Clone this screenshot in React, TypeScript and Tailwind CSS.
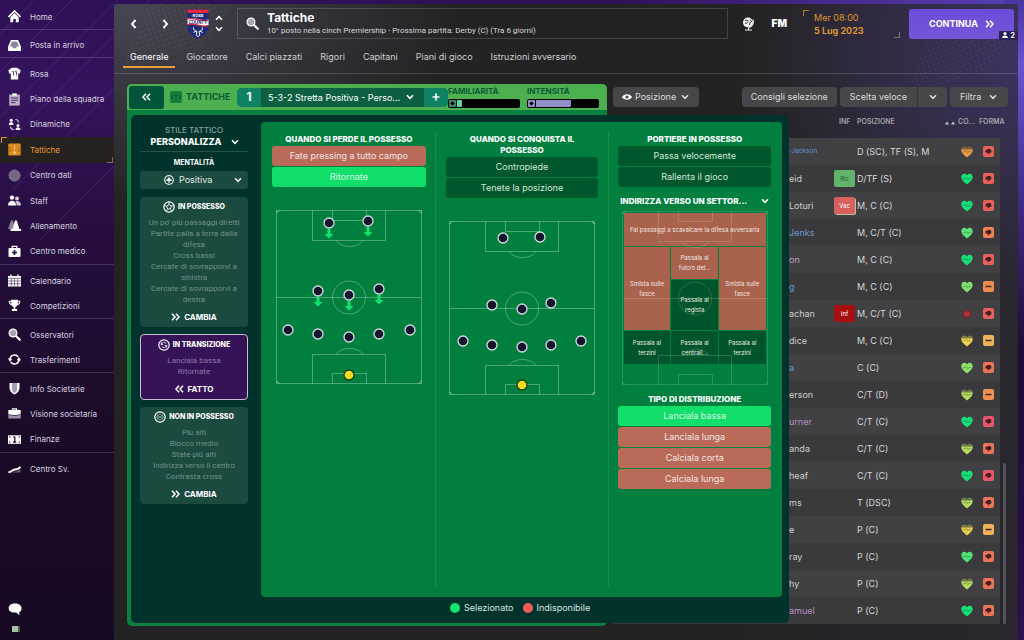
import type { ReactNode } from 'react';

const CHEVRON = 'pointer-events-none absolute top-1/2 -translate-y-1/2';

function Chevron({ className = '' }: { className?: string }) {
  return (
    <svg viewBox="0 0 8 6" aria-hidden="true" className={`h-[6px] w-2 shrink-0 ${className}`}>
      <path d="M1 1.3 4 4.3 7 1.3" fill="none" stroke="currentColor" strokeWidth="1.6" />
    </svg>
  );
}

function Double({ left = false, className = '' }: { left?: boolean; className?: string }) {
  return (
    <svg viewBox="0 0 9 8" aria-hidden="true" className={`h-2 w-[9px] shrink-0 ${left ? 'rotate-180' : ''} ${className}`}>
      <path d="M1 .8 4 4 1 7.2M5 .8 8 4 5 7.2" fill="none" stroke="currentColor" strokeWidth="1.5" />
    </svg>
  );
}

function Magnifier() {
  return (
    <svg viewBox="0 0 13 13" className="size-[13px] shrink-0" aria-hidden="true">
      <circle cx="5" cy="5" r="3.9" fill="#a9a6ae" stroke="#fff" strokeWidth="1.2" />
      <path d="m8.2 8.2 3.6 3.6" stroke="#fff" strokeWidth="2.2" strokeLinecap="round" />
    </svg>
  );
}

const icons: Record<string, ReactNode> = {
  home: (
    <>
      <path d="M.5 7 6.5 1l6 6" fill="none" stroke="#fff" strokeWidth="1.6" />
      <path d="M2.3 7.2 6.5 3l4.2 4.2v5H7.8V9H5.2v3.200H2.300Z" fill="#fff" />
    </>
  ),
  inbox: (
    <>
      <path d="M3 1h7l3 6.500V12H0V7.500Z" fill="#8f849f" />
      <path d="M3 1h7l2.800 6.500V12H.2V7.500ZM4 2.400 2 7.600h2.200L5 9.200h3l.8-1.600H11L9 2.400Z" fill="#fff" fillRule="evenodd" />
    </>
  ),
  shirt: (
    <>
      <path d="M4 .8h5l3.700 2.400-1 3.500-1.500-.4v6.200H2.800V6.300l-1.500.4-1-3.500Z" fill="#fff" />
      <path d="M4.300 4.500h1.200V8.500M7.200 4.500h1.200V8.500" fill="none" stroke="#4a2a6e" strokeWidth=".9" />
    </>
  ),
  clipboard: (
    <>
      <path d="M1.200 1.600h10.600v11H1.200Z" fill="#b9b1c4" />
      <path d="M4.300.3h4.400v2.400H4.300Z" fill="#fff" />
      <path d="M3 5h7M3 7.300h7M3 9.600h4.500" stroke="#3d2059" strokeWidth=".9" />
    </>
  ),
  dynamics: (
    <>
      <circle cx="3.200" cy="2.200" r="1.500" fill="#fff" />
      <path d="M.8 7c0-4 4.800-4 4.800 0ZM7.500 12c0-3.600 5-3.600 5 0Z" fill="#fff" />
      <circle cx="10" cy="7.500" r="1.500" fill="#fff" />
      <path d="M7.300 1.500c2 0 3.200 1 3.200 3M2.600 8.600c0 2 1.200 3 3.200 3" fill="none" stroke="#cfc8d8" strokeWidth="1.200" />
    </>
  ),
  tactics: (
    <>
      <rect x=".3" y=".5" width="12.400" height="12" rx="1" fill="#d98a22" />
      <path d="M6.500 2.600v4M6.500 8v2.600M4.900 8.800l1.600 1.800 1.600-1.800" stroke="#fbc368" strokeWidth="1.200" fill="none" />
      <path d="M2 4v5M11 4v5" stroke="#a8650f" strokeWidth=".8" />
    </>
  ),
  data: (
    <>
      <circle cx="6.500" cy="6.500" r="5.500" fill="#6d6279" stroke="#9a90a6" strokeDasharray="1.500 .8" />
      <path d="M3 4.500 6.500 3 10 4.500v4L6.500 10 3 8.500Z" fill="none" stroke="#897e95" strokeWidth=".7" />
    </>
  ),
  staff: (
    <>
      <circle cx="4" cy="3.600" r="2.200" fill="#fff" />
      <path d="M0 11.500C0 5.300 8 5.300 8 11.500Z" fill="#fff" />
      <circle cx="9" cy="4.400" r="2" fill="#cfc9d8" />
      <path d="M8.600 11.500c0-2-.6-3.400-1.400-4.200C10.200 6.500 13 8 13 11.500Z" fill="#cfc9d8" />
    </>
  ),
  cones: (
    <>
      <path d="M3 1.500h1.800L7.500 10H0Z" fill="#8c8299" />
      <path d="M7 1.500h1.800l2.600 8.500H13v2H2.500v-2h1.900Z" fill="#fff" />
    </>
  ),
  medical: (
    <>
      <path d="M4.200 3.200V1.400h4.600v1.800" fill="none" stroke="#fff" strokeWidth="1.300" />
      <rect x=".5" y="3" width="12" height="9" rx="1" fill="#fff" />
      <path d="M6.500 5v5M4 7.500h5" stroke="#2a1240" strokeWidth="1.700" />
    </>
  ),
  calendar: (
    <>
      <path d="M0 2h13v10.500H0Z" fill="#fff" />
      <path d="M3 .5v2M10 .5v2" stroke="#fff" strokeWidth="1.400" />
      <path d="M0 4.300h13M3.300 4.300v8M6.500 4.300v8M9.700 4.300v8M0 7h13M0 9.700h13" stroke="#56436b" strokeWidth=".7" />
    </>
  ),
  trophy: (
    <path d="M3.200.8h6.600v.9h2.500c0 2.800-1 4.200-3 4.500-.5 1-1.200 1.600-2 1.900v2h1.800v2H3.900v-2h1.800v-2c-.8-.3-1.500-.9-2-1.900-2-.3-3-1.700-3-4.500h2.500Zm0 1.900H1.800c.1 1 .6 1.700 1.500 2.100Zm6.600 0-.1 2.100c.9-.4 1.400-1.100 1.500-2.100Z" fill="#fff" fillRule="evenodd" />
  ),
  transfers: (
    <>
      <path d="M2 6a4.500 4.500 0 0 1 8.200-2M11 7a4.500 4.500 0 0 1-8.200 2" fill="none" stroke="#fff" strokeWidth="1.500" />
      <path d="m0 5.600 4.200.2L2 9ZM13 7.400l-4.200-.2L11 4Z" fill="#fff" />
    </>
  ),
  shield: (
    <>
      <path d="M1.500 1h10v5c0 3-2 5-5 6.500-3-1.500-5-3.500-5-6.500Z" fill="#fff" />
      <path d="M4 1h5v6.500c0 1.500-1 2.800-2.500 3.800C5 10.300 4 9 4 7.500Z" fill="#a89eb4" />
    </>
  ),
  briefcase: (
    <>
      <path d="M4.500 3.200V1.800h4v1.400" fill="none" stroke="#fff" strokeWidth="1.200" />
      <path d="M.3 3h12.400v4.200l-6.200 1-6.200-1Z" fill="#fff" />
      <path d="M.3 7.800 6.500 9l6.200-1.200v3.700H.3Z" fill="#9c93a8" />
    </>
  ),
  money: (
    <>
      <rect y="2.300" width="13" height="8.500" fill="#fff" />
      <path d="M5.200 4.200h1.600v4.800M5 9h3.200" fill="none" stroke="#2a1240" strokeWidth="1.300" />
      <path d="M1 4h1.500M1 9h1.500M10.500 4H12M10.500 9H12" stroke="#2a1240" strokeWidth="1" />
    </>
  ),
  growth: (
    <>
      <path d="M.5 10.200C4 11 5 8.500 7.500 8.500c2 0 3.500-1 5-2.500v3.500H.5Z" fill="#6d6279" />
      <path d="M.5 9C3.500 9.500 4.500 6.500 7 6.500c2.300 0 4-1 5.500-2.700" fill="none" stroke="#fff" strokeWidth="1.900" />
    </>
  ),
};

type NavItem = { label: string; icon: string; active?: boolean };

const navGroups: { size: string; items: NavItem[] }[] = [
  { size: 'h-[29px] border-transparent', items: [{ label: 'Home', icon: 'home' }] },
  { size: 'h-7 border-white/15', items: [{ label: 'Posta in arrivo', icon: 'inbox' }] },
  {
    size: 'h-[207px] border-white/15',
    items: [
      { label: 'Rosa', icon: 'shirt' },
      { label: 'Piano della squadra', icon: 'clipboard' },
      { label: 'Dinamiche', icon: 'dynamics' },
      { label: 'Tattiche', icon: 'tactics', active: true },
      { label: 'Centro dati', icon: 'data' },
      { label: 'Staff', icon: 'staff' },
      { label: 'Allenamento', icon: 'cones' },
      { label: 'Centro medico', icon: 'medical' },
    ],
  },
  {
    size: 'h-[54px] border-white/15',
    items: [
      { label: 'Calendario', icon: 'calendar' },
      { label: 'Competizioni', icon: 'trophy' },
    ],
  },
  {
    size: 'h-[54px] border-white/15',
    items: [
      { label: 'Osservatori', icon: 'search' },
      { label: 'Trasferimenti', icon: 'transfers' },
    ],
  },
  {
    size: 'h-20 border-white/15',
    items: [
      { label: 'Info Societarie', icon: 'shield' },
      { label: 'Visione societaria', icon: 'briefcase' },
      { label: 'Finanze', icon: 'money' },
    ],
  },
  { size: 'h-[30px] border-white/15', items: [{ label: 'Centro Sv.', icon: 'growth' }] },
];

function Sidebar() {
  return (
    <aside className="flex w-[114px] shrink-0 flex-col">
      <nav className="flex flex-col">
        {navGroups.map((group) => (
          <ul key={group.items[0].label} className={`flex flex-col border-t pt-[3px] ${group.size}`}>
            {group.items.map((item) => (
              <li key={item.label} className="flex min-h-0 flex-1">
                <a
                  href="#"
                  className={`relative flex flex-1 items-center gap-[9px] pl-2 text-[8px] ${
                    item.active ? 'bg-[#26221f] text-[#e89a2e]' : 'text-[#d9d3e0]'
                  }`}
                >
                  {item.icon === 'search' ? (
                    <Magnifier />
                  ) : (
                    <svg viewBox="0 0 13 13" className="size-[13px] shrink-0" aria-hidden="true">
                      {icons[item.icon]}
                    </svg>
                  )}
                  <span className="whitespace-nowrap">{item.label}</span>
                  {item.active && (
                    <>
                      <span className="absolute top-0 left-px size-[6px] border-t border-l border-[#e0932b]" />
                      <span className="absolute right-px bottom-0 size-[6px] border-r border-b border-[#6f6b75]" />
                    </>
                  )}
                </a>
              </li>
            ))}
          </ul>
        ))}
      </nav>
      <div className="mt-auto flex flex-col gap-[9px] pb-2 pl-2">
        <button type="button" aria-label="Chat" className="mb-px">
          <svg viewBox="0 0 14 13" className="h-[13px] w-[14px]">
            <path d="M7 .5c4 0 6.500 2 6.500 4.700 0 2.300-.9 3.400-2.300 4l.3 3-3.400-2.600C3.500 9.800.7 8.300.7 5.200.7 2.500 3 .5 7 .5Z" fill="#fff" />
          </svg>
        </button>
        <span className="ml-1 h-[6px] w-2 border-r-2 border-[#4e5a50] bg-[#a5c3a0]" />
      </div>
    </aside>
  );
}

function Crest() {
  return (
    <svg viewBox="0 0 22 30" className="h-[30px] w-[22px] shrink-0" role="img" aria-label="Ross County">
      <path d="M.5.500h21V18c0 5-5 9-10.500 11.500C5.500 27 .5 23 .5 18Z" fill="#1c2a78" />
      <path d="M.5.500h21v3.500H.5Z" fill="#e2263b" />
      <path d="M.5 9.500c7-2 14 3 21 1v6c-7 2-14-3-21-1Z" fill="#fff" />
      <path d="M.5 9.500c7-2 14 3 21 1v1.300c-7 2-14-3-21-1Z" fill="#e2263b" />
      <path d="M.5 15c7-2 14 3 21 1v1.300c-7 2-14-3-21-1Z" fill="#e2263b" />
      <text x="11" y="8" fontSize="4" fontWeight="700" fill="#fff" textAnchor="middle">ROSS</text>
      <text x="11" y="14.800" fontSize="4.200" fontWeight="700" fill="#1c2a78" textAnchor="middle">COUNTY</text>
      <path d="M6.500 18.500c-.5 2.500 1.500 3.500 3.500 4l-.8 3.500 1.800 1.800 1.800-1.800-.8-3.500c2-.5 4-1.500 3.500-4M9 22l-2.500 1.500M13 22l2.500 1.500" fill="none" stroke="#fff" strokeWidth="1" />
    </svg>
  );
}

function Header() {
  return (
    <header className="flex h-[31px] items-center pr-1 pl-[15px] text-white">
      <button type="button" aria-label="Indietro" className="flex w-2 justify-center">
        <svg viewBox="0 0 7 10" className="h-[10px] w-[7px]"><path d="M5.500 1 2 5l3.500 4" fill="none" stroke="#fff" strokeWidth="1.900" /></svg>
      </button>
      <button type="button" aria-label="Avanti" className="ml-6 flex w-2 justify-center">
        <svg viewBox="0 0 7 10" className="h-[10px] w-[7px]"><path d="M1.500 1 5 5 1.500 9" fill="none" stroke="#fff" strokeWidth="1.900" /></svg>
      </button>
      <span className="ml-[18px] flex"><Crest /></span>
      <button type="button" aria-label="Cambia squadra" className="mr-[14px] ml-[6px] flex flex-col gap-[5px]">
        <Chevron className="rotate-180" />
        <Chevron />
      </button>
      <div className="flex h-full min-w-0 flex-1 items-center gap-2 border border-white/15 pl-2">
        <Magnifier />
        <div className="min-w-0">
          <h1 className="text-[12px] leading-[14px] font-bold">Tattiche</h1>
          <p className="truncate font-['Roboto',sans-serif] text-[8px] leading-[11px] text-[#d6d6d8]">
            10° posto nella cinch Premiership - Prossima partita: Derby (C) (Tra 6 giorni)
          </p>
        </div>
      </div>
      <button type="button" aria-label="Social" className="ml-[14px]">
        <svg viewBox="0 0 13 14" className="h-[14px] w-[13px]">
          <circle cx="6" cy="5.500" r="5" fill="#f3f3f3" />
          <path d="M3 3.500 5 3l1 1.500-1.500 2L3 6M8 2.500l1.500 2-1.500 1-.5 2.500" fill="none" stroke="#333" />
          <path d="M11 2.500c1.600 3.500-1 8-4.500 8.300M3 13h7M6.500 11v2" fill="none" stroke="#f3f3f3" />
        </svg>
      </button>
      <a href="#" className="ml-[17px] text-[10px] font-black">FM</a>
      <div className="relative ml-4 flex h-[29px] w-[97px] flex-col justify-center pl-[11px] text-[9px] leading-[13px] text-[#dc9630]">
        <span className="absolute top-px left-0 size-[6px] border-t border-l border-[#b07a2c]" />
        <span>Mer 08:00</span>
        <span className="font-bold">5 Lug 2023</span>
        <span className="absolute right-0 bottom-0 size-[6px] border-r border-b border-[#77757c]" />
      </div>
      <button
        type="button"
        className="relative ml-[9px] flex h-[30px] w-[105px] items-center justify-center gap-[7px] rounded-[3px] bg-linear-to-b from-[#6d4cdb] to-[#7455d6] text-[9px] font-bold"
      >
        CONTINUA
        <Double />
        <span className="absolute -right-1 -bottom-px flex h-[9px] items-center gap-[3px] rounded-[1px] bg-[#2d1f58] px-[3px] text-[7px] leading-none">
          <svg viewBox="0 0 6 6" className="size-[6px]" aria-hidden="true">
            <circle cx="3" cy="1.600" r="1.500" fill="#fff" />
            <path d="M0 6c0-3.500 6-3.500 6 0Z" fill="#fff" />
          </svg>
          2
        </span>
      </button>
    </header>
  );
}

const tabs = ['Generale', 'Giocatore', 'Calci piazzati', 'Rigori', 'Capitani', 'Piani di gioco', 'Istruzioni avversario'];

function Tabs() {
  return (
    <nav className="flex h-[35px] items-end gap-1 border-b border-white/15 pb-[5px] pl-[9px]">
      {tabs.map((tab, i) => (
        <a
          key={tab}
          href="#"
          className={`flex h-[23px] items-center border-b-2 px-[7px] pt-[2px] text-[9px] whitespace-nowrap ${
            i === 0 ? 'border-[#e8a03c] text-white' : 'border-transparent text-[#cfcfd1]'
          }`}
        >
          {tab}
        </a>
      ))}
    </nav>
  );
}

function Meter({ label, fill, mark, width }: { label: string; fill: string; mark: string; width: string }) {
  return (
    <div className="flex w-[72px] flex-col">
      <span className="text-[8px] leading-[9px] font-bold text-[#0b5a32]">{label}</span>
      <div className="mt-[3px] flex h-[9px] rounded-[2px] bg-black p-px">
        <span className={`flex w-[7px] items-center justify-center rounded-[1px] ${mark}`}>
          <svg viewBox="0 0 5 5" className="size-[5px]" aria-hidden="true"><path d="M2.500.300 4.700 2.500 2.500 4.700.300 2.500Z" /></svg>
        </span>
        <span className={`ml-px rounded-r-[1px] ${fill}`} style={{ width }} />
      </div>
    </div>
  );
}

function TacticPanel() {
  return (
    <section className="flex flex-col overflow-hidden rounded-[5px] bg-[#0a8040]">
      <div className="flex h-[26px] items-center bg-[#4caf50] px-[2px]">
        <button type="button" aria-label="Chiudi" className="flex h-[23px] w-[35px] items-center justify-center rounded-[3px] bg-[#00543a] text-white">
          <Double left />
        </button>
        <svg viewBox="0 0 12 12" className="ml-[6px] size-3" aria-hidden="true">
          <rect width="12" height="12" rx="1.500" fill="#17803f" />
          <path d="M6 2.500v3.500M6 7.500v2M2 4v4M10 4v4" stroke="#0b5a32" strokeWidth="1.100" />
        </svg>
        <h2 className="ml-1 text-[9px] font-bold text-[#0b5a32]">TATTICHE</h2>
        <div className="ml-auto flex h-[19px] w-[211px] shrink-0 overflow-hidden rounded-[5px] bg-[#0c5f41] text-white">
          <span className="flex w-6 shrink-0 items-center justify-center bg-[#0f8264] text-[12px] font-bold">1</span>
          <div className="relative flex min-w-0 flex-1">
            <select aria-label="Tattica" className="h-full w-full appearance-none pr-[14px] pl-[7px] text-[9px] leading-[19px]">
              <option>5-3-2 Stretta Positiva - Perso...</option>
            </select>
            <Chevron className={`${CHEVRON} right-[10px]`} />
          </div>
          <button type="button" aria-label="Aggiungi tattica" className="flex w-6 shrink-0 items-center justify-center bg-[#0f8264]">
            <svg viewBox="0 0 8 8" className="size-2"><path d="M4 .5v7M.5 4h7" stroke="#fff" strokeWidth="1.700" /></svg>
          </button>
        </div>
        <div className="mr-[6px] flex gap-[7px]">
          <Meter label="FAMILIARITÀ" mark="bg-[#3a8a70]" fill="bg-[#5fd3a4]" width="5px" />
          <Meter label="INTENSITÀ" mark="bg-[#8f90c8]" fill="bg-[#8f90c8]" width="35px" />
        </div>
      </div>
    </section>
  );
}

type Player = { name: string; tone: string; pos: string; inf?: string; heart: string; drained?: boolean; form: string; flat?: boolean };

const players: Player[] = [
  { name: '-Jackson', tone: "text-[#5b8fc4] text-[7px] font-['Roboto',sans-serif]", pos: 'D (SC), TF (S), M', heart: '#e99b45', drained: true, form: '#e8605c' },
  { name: 'eid', tone: 'text-[#cfcfcf]', pos: 'D/TF (S)', inf: 'Ric', heart: '#15e077', form: '#e8605c' },
  { name: 'Loturi', tone: 'text-[#cfcfcf]', pos: 'M, C (C)', inf: 'Vac', heart: '#15e077', form: '#e8605c' },
  { name: 'Jenks', tone: 'text-[#6b9bd0]', pos: 'M, C/T (C)', heart: '#5fe276', form: '#ee8156' },
  { name: 'on', tone: 'text-[#b9a8c0]', pos: 'M, C (C)', heart: '#15e077', form: '#e8605c' },
  { name: 'g', tone: 'text-[#6b9bd0]', pos: 'M, C (C)', heart: '#7be06c', form: '#ee8b50', flat: true },
  { name: 'achan', tone: 'text-[#cfcfcf]', pos: 'M, C/T (C)', inf: 'Inf', heart: '', form: '#e8605c' },
  { name: 'dice', tone: 'text-[#cfcfcf]', pos: 'M, C (C)', heart: '#eed64f', drained: true, form: '#f0b259', flat: true },
  { name: 'a', tone: 'text-[#6b9bd0]', pos: 'C (C)', heart: '#8be068', form: '#ea7458' },
  { name: 'erson', tone: 'text-[#cfcfcf]', pos: 'C/T (D)', heart: '#b5dc5e', drained: true, form: '#ee9152', flat: true },
  { name: 'urner', tone: 'text-[#b892c2]', pos: 'C/T (C)', heart: '#15e077', form: '#e8566c' },
  { name: 'anda', tone: 'text-[#cfcfcf]', pos: 'C/T (C)', heart: '#b5dc5e', drained: true, form: '#ea7458' },
  { name: 'heaf', tone: 'text-[#cfcfcf]', pos: 'C/T (C)', heart: '#15e077', form: '#e8566c' },
  { name: 'ms', tone: 'text-[#cfcfcf]', pos: 'T (DSC)', heart: '#b5dc5e', drained: true, form: '#ea7458' },
  { name: 'e', tone: 'text-[#cfcfcf]', pos: 'P (C)', heart: '#e8cf50', drained: true, form: '#f0b259', flat: true },
  { name: 'ray', tone: 'text-[#cfcfcf]', pos: 'P (C)', heart: '#4fe277', form: '#ea7458' },
  { name: 'hy', tone: 'text-[#cfcfcf]', pos: 'P (C)', heart: '#b5dc5e', drained: true, form: '#ea7458' },
  { name: 'amuel', tone: 'text-[#b892c2]', pos: 'P (C)', heart: '#15e077', form: '#ea7458' },
];

const infTone: Record<string, string> = {
  Ric: 'bg-[#62b36c] text-[#205c2b]',
  Vac: 'bg-[#d8605f] text-white shadow-[1px_1px_0_#b9c49a]',
  Inf: 'bg-[#a80d10] text-white',
};

const HEART = 'M6 11.500C2.500 8.700.3 6.800.3 4.100.3 2.200 1.700.8 3.300.8 4.400.8 5.400 1.400 6 2.300 6.600 1.400 7.600.8 8.700.8c1.600 0 3 1.400 3 3.300 0 2.700-2.200 4.600-5.700 7.400Z';

function Heart({ color, drained }: { color: string; drained?: boolean }) {
  if (!color) {
    return (
      <svg viewBox="0 0 12 12" className="inline-block size-3" aria-hidden="true">
        <circle cx="6" cy="6" r="4.500" fill="#6e2c30" />
        <circle cx="6" cy="6" r="2.800" fill="#b23238" />
      </svg>
    );
  }
  return (
    <svg viewBox="0 0 12 12" className="inline-block size-3" aria-hidden="true">
      <path d={HEART} fill={color} />
      {drained && <path d="M.6 3.600C.8 1.900 2 .8 3.300.8 4.400.8 5.400 1.400 6 2.300 6.600 1.400 7.600.8 8.700.8c1.300 0 2.500 1.100 2.700 2.800Z" fill="#3a3a3c" opacity=".6" />}
      <path d="M2.500 5.600h1.600L5.200 4.500l1.600 2.200 1-1.100h1.700" fill="none" stroke="#2b3a30" strokeOpacity=".6" strokeWidth=".7" />
    </svg>
  );
}

function Form({ color, flat }: { color: string; flat?: boolean }) {
  return (
    <svg viewBox="0 0 11 11" className="inline-block size-[11px]" aria-hidden="true">
      <rect width="11" height="11" rx="2" fill={color} />
      {flat ? (
        <path d="M2.500 5.500h6" stroke="#3a2b22" strokeWidth="1.500" />
      ) : (
        <path d="M2.500 4h1.200l.6-.9h3l1 1.200v1.900l-.9.700H6.100v1.300l-.8.4-.8-1.700-.8-.5H2.500Z" fill="#452022" />
      )}
    </svg>
  );
}

const TOOL = 'h-5 rounded-[4px] bg-[#474648] text-[9px] text-[#dcdcdc]';

function Squad() {
  return (
    <section className="flex min-w-0 flex-col pt-[3px]">
      <div className="flex items-center">
        <div className={`relative flex items-center pl-[9px] ${TOOL}`}>
          <svg viewBox="0 0 10 8" className="h-2 w-[10px]" aria-hidden="true">
            <path d="M0 4C2 .3 8 .3 10 4 8 7.700 2 7.700 0 4Z" fill="#fff" />
            <circle cx="5" cy="4" r="1.600" fill="#474648" />
          </svg>
          <select aria-label="Mostra" className="h-5 appearance-none pr-[22px] pl-[3px] leading-5">
            <option>Posizione</option>
          </select>
          <Chevron className={`${CHEVRON} right-[10px]`} />
        </div>
        <div className="ml-auto flex gap-[3px]">
          <button type="button" className={`px-[9px] ${TOOL}`}>Consigli selezione</button>
          <div className={`flex ${TOOL}`}>
            <button type="button" className="border-r border-[#343336] px-[10px]">Scelta veloce</button>
            <button type="button" aria-label="Opzioni scelta veloce" className="flex w-[29px] items-center justify-center">
              <Chevron />
            </button>
          </div>
          <div className={`relative flex ${TOOL}`}>
            <select aria-label="Filtro" className="h-5 appearance-none pr-[26px] pl-[10px] leading-5">
              <option>Filtra</option>
            </select>
            <Chevron className={`${CHEVRON} right-[11px]`} />
          </div>
        </div>
      </div>
      <div className="relative mr-2">
        <table className="w-full table-fixed border-collapse text-left">
          <colgroup>
            <col />
            <col className="w-[46px]" />
            <col className="w-[23px]" />
            <col className="w-[98px]" />
            <col className="w-[24px]" />
            <col className="w-[21px]" />
          </colgroup>
          <thead className="text-[7px] whitespace-nowrap text-[#a3a2a6]">
            <tr className="h-[31px]">
              <td />
              <td />
              <th className="p-0 pl-[5px] font-semibold">INF</th>
              <th className="p-0 font-semibold">POSIZIONE</th>
              <th className="p-0 font-semibold">
                <span className="flex items-center justify-end gap-[3px] pr-1">
                  <svg viewBox="0 0 10 4" className="h-1 w-[10px] shrink-0" aria-hidden="true">
                    <path d="M0 3.500 2 .5l2 3ZM6 3.500l2-3 2 3Z" fill="#c8c8ca" />
                  </svg>
                  CO...
                </span>
              </th>
              <th className="p-0 font-semibold">FORMA</th>
            </tr>
          </thead>
          <tbody className="text-[9px] text-[#d8d8d9]">
            {players.map((p) => (
              <tr key={p.name} className="h-[27px] odd:bg-[#414042] even:bg-[#3a393b]">
                <td className="p-0" />
                <td className={`overflow-hidden p-0 pl-px whitespace-nowrap ${p.tone}`}>{p.name}</td>
                <td className="p-0">
                  {p.inf && (
                    <span className={`flex h-[17px] w-[21px] items-center justify-center rounded-[2px] text-[6px] ${infTone[p.inf]}`}>{p.inf}</span>
                  )}
                </td>
                <td className="p-0 whitespace-nowrap">{p.pos}</td>
                <td className="p-0 pr-[6px] text-right leading-none"><Heart color={p.heart} drained={p.drained} /></td>
                <td className="p-0 pl-1 leading-none"><Form color={p.form} flat={p.flat} /></td>
              </tr>
            ))}
          </tbody>
        </table>
        <span className="absolute -right-[6px] bottom-0 h-[161px] w-[3px] rounded-full bg-[#55545a]" />
      </div>
    </section>
  );
}

function PitchLines() {
  return (
    <g fill="none" stroke="#fff" strokeOpacity=".3">
      <rect x=".5" y=".5" width="145" height="173" />
      <path d="M.5 87.500h145M36.500 .5v30h73v-30M56.500.500v10h34V.5M36.500 173.500v-29h73v29M56.500 173.500v-10h34v10" />
      <path d="M60 30.500c5 8 22 8 27 0M60 144.500c5-8 22-8 27 0" />
      <circle cx="73" cy="87.500" r="16.500" />
      <path d="M3 .5.500 3M143 .5l2.500 2.500M3 173.500.5 171M143 173.500l2.500-2.500" strokeOpacity=".6" />
    </g>
  );
}

type Point = [number, number];

function Pitch({ dots, keeper, retreat = 0 }: { dots: Point[]; keeper: Point; retreat?: number }) {
  return (
    <svg viewBox="0 0 146 174" className="mx-auto mt-[23px] h-[174px] w-[146px] overflow-visible" role="img" aria-label="Formazione">
      <PitchLines />
      {dots.slice(0, retreat).map(([x, y]) => (
        <path key={`${x}-${y}`} d={`M${x - 1.5} ${y + 6}h3v5h3l-4.500 4.500-4.500-4.500h3Z`} fill="#12e36c" />
      ))}
      {dots.map(([x, y]) => (
        <circle key={`${x}-${y}`} cx={x} cy={y} r="5" fill="#14142e" stroke="#d7dde0" strokeWidth="1.300" />
      ))}
      <circle cx={keeper[0]} cy={keeper[1]} r="5" fill="#f3dc23" stroke="#173d12" strokeWidth="1.300" />
    </svg>
  );
}

const optionTone = {
  on: 'bg-[#12df69] text-[#d9f7e3]',
  off: 'bg-[#b96a59] text-[#f6e6e1]',
  idle: 'bg-[#00572c] text-[#d3e6da]',
};

type Option = [string, keyof typeof optionTone];

function Options({ items }: { items: Option[] }) {
  return (
    <div className="flex flex-col gap-px">
      {items.map(([label, tone]) => (
        <button key={label} type="button" className={`h-5 rounded-[3px] text-[9px] ${optionTone[tone]}`}>
          {label}
        </button>
      ))}
    </div>
  );
}

const TITLE = 'mb-px text-center text-[8px] leading-[11px] font-extrabold text-white';

const zones: { label: string; cell: string }[] = [
  { label: 'Fai passaggi a scavalcare la difesa avversaria', cell: 'col-span-3 bg-[#a9634c]' },
  { label: 'Smista sulle fasce', cell: 'row-span-2 bg-[#a9634c] px-1' },
  { label: 'Passala al fulcro del...', cell: 'bg-[#a9634c] px-1' },
  { label: 'Smista sulle fasce', cell: 'row-span-2 bg-[#a9634c] px-1' },
  { label: 'Passala al regista', cell: 'bg-[#00552b] px-2' },
  { label: 'Passala ai terzini', cell: 'bg-[#00552b] px-2' },
  { label: 'Passala ai centrali...', cell: 'bg-[#00552b] px-2' },
  { label: 'Passala ai terzini', cell: 'bg-[#00552b] px-2' },
];

function Zones() {
  return (
    <div className="relative mx-auto mt-[3px] h-[174px] w-[146px] p-[2px]">
      <svg viewBox="0 0 146 174" className="pointer-events-none absolute inset-0 z-10 h-[174px] w-[146px] opacity-50" aria-hidden="true">
        <PitchLines />
      </svg>
      <div className="grid grid-cols-3 grid-rows-[33px_32px_50px_33px] gap-px">
        {zones.map((zone, i) => (
          <button key={i} type="button" className={`flex items-center justify-center text-center text-[6px] leading-[10px] text-[#f0e7e1] ${zone.cell}`}>
            {zone.label}
          </button>
        ))}
      </div>
    </div>
  );
}

const cardIcons: Record<string, ReactNode> = {
  ball: <path d="M6 3.500 8.300 5.200l-.9 2.700H4.600l-.9-2.700ZM6 1v2.500M8.300 5.200l2.400-.8M7.400 7.900l1.500 2M4.600 7.900l-1.500 2M3.700 5.200l-2.400-.8" />,
  cycle: <path d="M3.300 5.500C4 3 7 3 8.300 4.600M8.700 6.500C8 9 5 9 3.700 7.400M3.300 3.600v2h1.900M8.700 8.400v-2H6.800" />,
  net: <path d="M3 4.500 6 3l3 1.500v3L6 9 3 7.500ZM3 4.500l6 3M9 4.500l-6 3" opacity=".45" />,
};

function PhaseCard({ icon, title, lines, action, selected = false }: { icon: string; title: string; lines: string[]; action: string; selected?: boolean }) {
  return (
    <article
      className={`rounded-[4px] py-1 text-center ${
        selected ? 'border border-[#c9bfd6] bg-[#361257] text-[#8d77a4]' : 'bg-[#1b4a40] text-[#6f918a]'
      }`}
    >
      <h3 className="flex h-3 items-center justify-center gap-[3px] text-[7px] font-extrabold text-white">
        <svg viewBox="0 0 12 12" className="size-3 shrink-0" fill="none" stroke="#fff" strokeWidth=".9" aria-hidden="true">
          <circle cx="6" cy="6" r="5.200" strokeWidth="1.200" />
          {cardIcons[icon]}
        </svg>
        {title}
      </h3>
      <ul className="mt-1 font-['Roboto',sans-serif] text-[8px] leading-[11px]">
        {lines.map((line) => (
          <li key={line} className="px-1">{line}</li>
        ))}
      </ul>
      <button type="button" className="mx-auto mt-[6px] flex h-3 items-center gap-1 text-[8px] font-bold text-white">
        <Double left={selected} />
        {action}
      </button>
    </article>
  );
}

function StyleColumn() {
  return (
    <div className="flex w-[130px] shrink-0 flex-col pt-[10px] pr-[13px] pl-[9px] text-center">
      <span className="text-[8px] leading-[10px] font-medium text-[#84a09a]">STILE TATTICO</span>
      <div className="relative border-b border-white/15 pb-[2px]">
        <select aria-label="Stile tattico" className="block h-[14px] w-full appearance-none pr-4 text-center text-[9px] leading-[14px] font-extrabold text-white">
          <option>PERSONALIZZA</option>
        </select>
        <Chevron className="pointer-events-none absolute top-1 right-[9px] text-white" />
      </div>
      <label htmlFor="mentality" className="mt-[6px] mb-[3px] text-[7px] leading-[10px] font-bold text-white">MENTALITÀ</label>
      <div className="relative h-[18px] rounded-[3px] bg-[#1b4a40] text-[9px] text-[#e3ebe9]">
        <svg viewBox="0 0 12 12" className="pointer-events-none absolute top-[4px] left-6 size-[10px]" fill="none" stroke="currentColor" aria-hidden="true">
          <circle cx="6" cy="6" r="5.200" strokeWidth="1.400" />
          <path d="M6 9.500V4.500M3.500 6.500 6 3.500l2.500 3Z" fill="currentColor" strokeWidth="1.500" />
        </svg>
        <select id="mentality" className="block h-[18px] w-full appearance-none pl-[39px] text-left leading-[18px]">
          <option>Positiva</option>
        </select>
        <Chevron className={`${CHEVRON} right-[6px]`} />
      </div>
      <div className="mt-2 flex flex-col gap-[7px]">
        <PhaseCard
          icon="ball"
          title="IN POSSESSO"
          lines={["Un po' più passaggi diretti", 'Partite palla a terra dalla difesa', 'Cross bassi', 'Cercate di sovrapporvi a sinistra', 'Cercate di sovrapporvi a destra']}
          action="CAMBIA"
        />
        <PhaseCard icon="cycle" title="IN TRANSIZIONE" lines={['Lanciala bassa', 'Ritornate']} action="FATTO" selected />
        <PhaseCard
          icon="net"
          title="NON IN POSSESSO"
          lines={['Più alti', 'Blocco medio', 'State più alti', 'Indirizza verso il centro', 'Contrasta cross']}
          action="CAMBIA"
        />
      </div>
    </div>
  );
}

function TransitionDialog() {
  return (
    <div role="dialog" aria-label="In transizione" className="absolute top-[41px] right-[229px] bottom-[17px] left-[17px] flex rounded-[5px] bg-[#00332b]">
      <StyleColumn />
      <div className="flex min-w-0 flex-1 flex-col pt-[7px] pr-[7px]">
        <div className="grid flex-1 grid-cols-3 rounded-[4px] bg-[#007f3f] py-[10px]">
          <div className="pr-[9px] pl-[11px] pt-[2px]">
            <h3 className={TITLE}>QUANDO SI PERDE IL POSSESSO</h3>
            <Options items={[['Fate pressing a tutto campo', 'off'], ['Ritornate', 'on']]} />
            <Pitch
              retreat={5}
              keeper={[73, 165]}
              dots={[[53, 13], [92, 11], [42, 81], [73, 85], [103, 79], [12, 120], [42, 124], [73, 127], [103, 124], [134, 120]]}
            />
          </div>
          <div className="border-l border-white/10 px-[10px] pt-[2px]">
            <h3 className={`${TITLE} px-2`}>QUANDO SI CONQUISTA IL POSSESSO</h3>
            <Options items={[['Contropiede', 'idle'], ['Tenete la posizione', 'idle']]} />
            <Pitch
              keeper={[73, 164]}
              dots={[[54, 17], [91, 16], [43, 84], [73, 88], [102, 82], [14, 120], [43, 124], [73, 126], [102, 124], [132, 120]]}
            />
          </div>
          <div className="border-l border-white/10 pr-[11px] pl-[9px] pt-[2px]">
            <h3 className={TITLE}>PORTIERE IN POSSESSO</h3>
            <Options items={[['Passa velocemente', 'idle'], ['Rallenta il gioco', 'idle']]} />
            <div className="relative mt-[7px] flex text-white">
              <select aria-label="Indirizza verso" className="h-[14px] w-full appearance-none pr-3 pl-[2px] text-[8px] leading-[14px] font-extrabold">
                <option>INDIRIZZA VERSO UN SETTOR...</option>
              </select>
              <Chevron className={`${CHEVRON} right-[2px]`} />
            </div>
            <Zones />
            <h3 className={`${TITLE} mt-[9px]`}>TIPO DI DISTRIBUZIONE</h3>
            <Options items={[['Lanciala bassa', 'on'], ['Lanciala lunga', 'off'], ['Calciala corta', 'off'], ['Calciala lunga', 'off']]} />
          </div>
        </div>
        <div className="flex h-[26px] items-center gap-[9px] pb-[5px] pl-[189px] text-[9px] text-[#dbe5e2]">
          <span className="flex items-center gap-1"><i className="size-[10px] rounded-full bg-[#12e36c]" />Selezionato</span>
          <span className="flex items-center gap-1"><i className="size-[10px] rounded-full bg-[#f65a57]" />Indisponibile</span>
        </div>
      </div>
    </div>
  );
}

function Backdrop() {
  return (
    <svg className="pointer-events-none absolute inset-0 -z-10 h-full w-full" aria-hidden="true">
      <defs>
        <linearGradient id="night" x1="0" y1="0" x2="0" y2="1">
          <stop offset="0" stopColor="#2f1158" />
          <stop offset=".15" stopColor="#34145c" />
          <stop offset=".35" stopColor="#260e40" />
          <stop offset=".65" stopColor="#1b0a28" />
          <stop offset="1" stopColor="#180922" />
        </linearGradient>
        <linearGradient id="glow" x1="0" y1="0" x2="0" y2="1">
          <stop offset="0" stopColor="#4b33a0" />
          <stop offset=".1" stopColor="#6a52d2" />
          <stop offset=".35" stopColor="#3b2678" />
          <stop offset=".55" stopColor="#1c0c33" />
          <stop offset="1" stopColor="#2b1050" />
        </linearGradient>
        <linearGradient id="rim">
          <stop offset="0" stopColor="#5a3fb8" stopOpacity="0" />
          <stop offset="1" stopColor="#5a3fb8" />
        </linearGradient>
      </defs>
      <rect width="100%" height="100%" fill="url(#night)" />
      <g stroke="#8a5fc4" strokeOpacity=".22" fill="none">
        <path d="M0 72 72 0M0 118 118 0M0 150 150 0M12 190 130 72M40 240 130 150M0 34 34 0" />
      </g>
      <rect x="60%" width="40%" height="8" fill="url(#rim)" />
      <rect x="98%" width="2%" height="100%" fill="url(#glow)" />
    </svg>
  );
}

function DotTexture({ className }: { className: string }) {
  return (
    <svg viewBox="0 0 110 70" className={`pointer-events-none absolute h-[70px] w-[110px] ${className}`} aria-hidden="true">
      <defs>
        <pattern id="dots" width="5" height="5" patternUnits="userSpaceOnUse" patternTransform="rotate(-18)">
          <circle cx="2.500" cy="2.500" r="1" fill="#fff" fillOpacity=".07" />
        </pattern>
      </defs>
      <path d="M0 66 24 0h86L82 40Z" fill="url(#dots)" />
    </svg>
  );
}

export default function App() {
  return (
    <div className="relative isolate flex min-h-screen overflow-hidden font-['Inter','Noto_Sans',sans-serif]">
      <Backdrop />
      <Sidebar />
      <main className="relative mt-1 mr-[6px] flex min-w-0 flex-1 flex-col rounded-t-[3px] bg-[#242324] bg-[radial-gradient(ellipse_340px_200px_at_0%_0%,#474654,transparent),radial-gradient(ellipse_260px_240px_at_100%_8%,#3d325f,transparent),linear-gradient(90deg,transparent_70%,#29262e)] pt-1">
        <DotTexture className="top-0 left-2" />
        <DotTexture className="top-6 right-0" />
        <Header />
        <Tabs />
        <div className="relative grid flex-1 grid-cols-[480fr_395fr] gap-[6px] pt-[10px] pr-[10px] pb-[14px] pl-[13px]">
          <TacticPanel />
          <Squad />
          <TransitionDialog />
        </div>
      </main>
    </div>
  );
}
